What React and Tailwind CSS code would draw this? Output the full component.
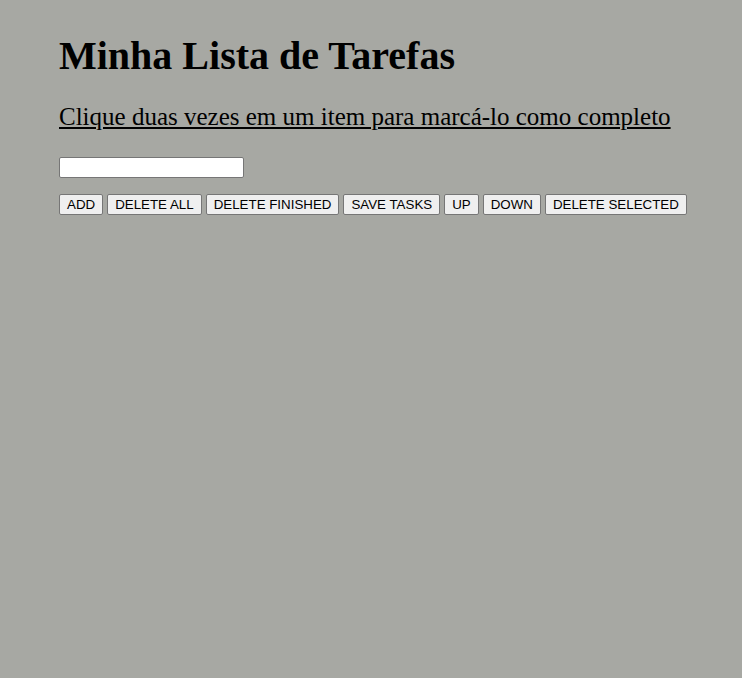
export default function App() {
  const btns = ["ADD", "DELETE ALL", "DELETE FINISHED", "SAVE TASKS", "UP", "DOWN", "DELETE SELECTED"];
  return (
    <div className="min-h-[678px] w-full bg-[#a7a8a3] pl-[59px] pt-[33px]" style={{ fontFamily: '"Liberation Serif", serif' }}>
      <h1 className="text-[40px] font-bold leading-[46px] text-black">Minha Lista de Tarefas</h1>
      <p className="mt-[23px] text-[25px] leading-[29px] text-black underline">Clique duas vezes em um item para marcá-lo como completo</p>
      <div className="mt-[26px] flex">
        <input type="text" className="h-[21px] w-[185px] rounded-[2px] border border-[#767676] bg-white px-[2px] text-[13px] outline-none" />
      </div>
      <div className="mt-[16px] flex gap-[4px]" style={{ fontFamily: '"Liberation Sans", Arial, sans-serif' }}>
        {btns.map((b) => (
          <button key={b} className="h-[21px] rounded-[2px] border border-[#767676] bg-[#efefef] px-[7px] text-[13.33px] leading-[15px] text-black">
            {b}
          </button>
        ))}
      </div>
    </div>
  );
}
